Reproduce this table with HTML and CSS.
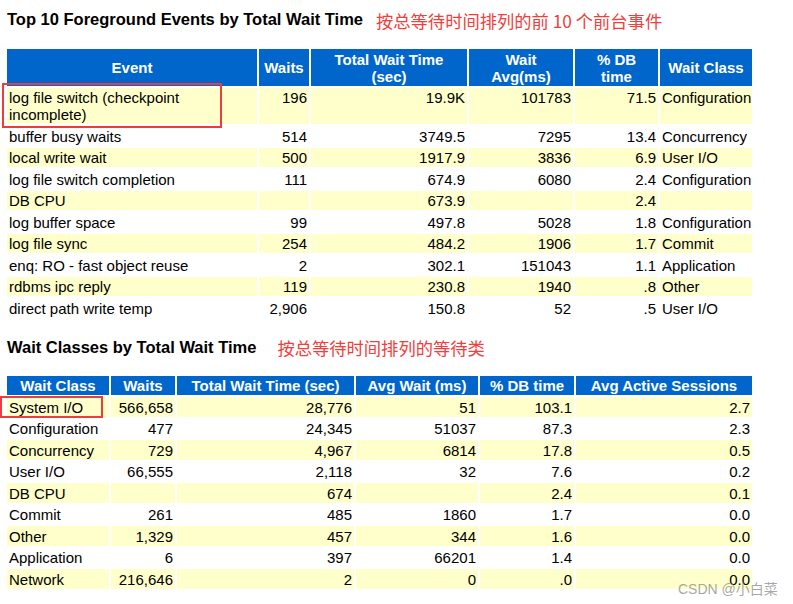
FILE: index.html
```html
<!DOCTYPE html>
<html>
<head>
<meta charset="utf-8">
<link rel="stylesheet" href="styles.css">
</head>
<body>
<div class="page">
  <div class="title-row t1">
    <h2 class="title">Top 10 Foreground Events by Total Wait Time</h2>
    <span class="note note1">按总等待时间排列的前 10 个前台事件</span>
  </div>
  <table class="awr awr1">
    <tr>
      <th class="c1">Event</th>
      <th class="c2">Waits</th>
      <th class="c3">Total Wait Time<br>(sec)</th>
      <th class="c4">Wait<br>Avg(ms)</th>
      <th class="c5">% DB<br>time</th>
      <th class="c6">Wait Class</th>
    </tr>
    <tr class="y"><td class="hl-cell"><span class="hl hl1"></span>log file switch (checkpoint<br>incomplete)</td><td class="n">196</td><td class="n">19.9K</td><td class="n">101783</td><td class="n">71.5</td><td>Configuration</td></tr>
    <tr><td>buffer busy waits</td><td class="n">514</td><td class="n">3749.5</td><td class="n">7295</td><td class="n">13.4</td><td>Concurrency</td></tr>
    <tr class="y"><td>local write wait</td><td class="n">500</td><td class="n">1917.9</td><td class="n">3836</td><td class="n">6.9</td><td>User I/O</td></tr>
    <tr><td>log file switch completion</td><td class="n">111</td><td class="n">674.9</td><td class="n">6080</td><td class="n">2.4</td><td>Configuration</td></tr>
    <tr class="y"><td>DB CPU</td><td class="n"></td><td class="n">673.9</td><td class="n"></td><td class="n">2.4</td><td></td></tr>
    <tr><td>log buffer space</td><td class="n">99</td><td class="n">497.8</td><td class="n">5028</td><td class="n">1.8</td><td>Configuration</td></tr>
    <tr class="y"><td>log file sync</td><td class="n">254</td><td class="n">484.2</td><td class="n">1906</td><td class="n">1.7</td><td>Commit</td></tr>
    <tr><td>enq: RO - fast object reuse</td><td class="n">2</td><td class="n">302.1</td><td class="n">151043</td><td class="n">1.1</td><td>Application</td></tr>
    <tr class="y"><td>rdbms ipc reply</td><td class="n">119</td><td class="n">230.8</td><td class="n">1940</td><td class="n">.8</td><td>Other</td></tr>
    <tr><td>direct path write temp</td><td class="n">2,906</td><td class="n">150.8</td><td class="n">52</td><td class="n">.5</td><td>User I/O</td></tr>
  </table>

  <div class="title-row t2">
    <h2 class="title">Wait Classes by Total Wait Time</h2>
    <span class="note note2">按总等待时间排列的等待类</span>
  </div>
  <table class="awr awr2">
    <tr>
      <th class="d1">Wait Class</th>
      <th class="d2">Waits</th>
      <th class="d3">Total Wait Time (sec)</th>
      <th class="d4">Avg Wait (ms)</th>
      <th class="d5">% DB time</th>
      <th class="d6">Avg Active Sessions</th>
    </tr>
    <tr class="y"><td class="hl-cell"><span class="hl hl2"></span>System I/O</td><td class="n">566,658</td><td class="n">28,776</td><td class="n">51</td><td class="n">103.1</td><td class="n">2.7</td></tr>
    <tr><td>Configuration</td><td class="n">477</td><td class="n">24,345</td><td class="n">51037</td><td class="n">87.3</td><td class="n">2.3</td></tr>
    <tr class="y"><td>Concurrency</td><td class="n">729</td><td class="n">4,967</td><td class="n">6814</td><td class="n">17.8</td><td class="n">0.5</td></tr>
    <tr><td>User I/O</td><td class="n">66,555</td><td class="n">2,118</td><td class="n">32</td><td class="n">7.6</td><td class="n">0.2</td></tr>
    <tr class="y"><td>DB CPU</td><td class="n"></td><td class="n">674</td><td class="n"></td><td class="n">2.4</td><td class="n">0.1</td></tr>
    <tr><td>Commit</td><td class="n">261</td><td class="n">485</td><td class="n">1860</td><td class="n">1.7</td><td class="n">0.0</td></tr>
    <tr class="y"><td>Other</td><td class="n">1,329</td><td class="n">457</td><td class="n">344</td><td class="n">1.6</td><td class="n">0.0</td></tr>
    <tr><td>Application</td><td class="n">6</td><td class="n">397</td><td class="n">66201</td><td class="n">1.4</td><td class="n">0.0</td></tr>
    <tr class="y"><td>Network</td><td class="n">216,646</td><td class="n">2</td><td class="n">0</td><td class="n">.0</td><td class="n">0.0</td></tr>
  </table>
  <div class="watermark">CSDN @小白菜</div>
</div>
</body>
</html>
```

FILE: styles.css
```css
html, body {
  margin: 0;
  padding: 0;
  background: #ffffff;
}

.page {
  position: relative;
  width: 793px;
  height: 604px;
  overflow: hidden;
  font-family: "Liberation Sans", Arial, sans-serif;
  color: #000;
}

.title-row {
  display: flex;
  align-items: center;
  height: 20px;
  padding-left: 7px;
}

.t1 { margin-top: 9px; margin-bottom: 18px; }
.t2 { margin-top: 17px; margin-bottom: 17px; }

.title {
  margin: 0;
  font-size: 16.5px;
  font-weight: bold;
  line-height: 20px;
  color: #000;
}

.note {
  font-family: "Noto Sans CJK SC", "Noto Sans", sans-serif;
  font-size: 17.3px;
  line-height: 20px;
  color: #f0403c;
}

.note1 { margin-left: 13px; margin-top: 3px; }
.note2 { margin-left: 21px; margin-top: 3px; }

.awr {
  margin-left: 5px;
  border-collapse: separate;
  border-spacing: 2px;
  table-layout: fixed;
  width: 749px;
  font-size: 15px;
}

.awr th, .awr td {
  box-sizing: border-box;
  padding: 1.5px 2px 1px;
  line-height: 17px;
  white-space: nowrap;
}

.awr th {
  background: #0066cc;
  color: #fff;
  font-weight: bold;
  text-align: center;
  vertical-align: middle;
}

.awr td {
  vertical-align: top;
  text-align: left;
}

.awr td.n { text-align: right; }

.awr tr.y td { background: #ffffcc; }

.c1 { width: 250px; }
.c2 { width: 50px; }
.c3 { width: 156px; }
.c4 { width: 104px; }
.c5 { width: 83px; }
.c6 { width: 92px; }

.d1 { width: 102px; }
.d2 { width: 64px; }
.d3 { width: 177px; }
.d4 { width: 122px; }
.d5 { width: 94px; }
.d6 { width: 176px; }

.hl-cell { position: relative; }

.hl {
  position: absolute;
  border: 2.5px solid #ee3b3b;
  box-sizing: border-box;
  pointer-events: none;
}

.hl1 {
  left: -5px;
  top: -5px;
  width: 220px;
  height: 45px;
}

.hl2 {
  left: -7px;
  top: -1.5px;
  width: 103px;
  height: 22px;
}

.watermark {
  position: absolute;
  left: 678px;
  top: 580px;
  font-family: "Liberation Sans", "Noto Sans CJK SC", sans-serif;
  font-size: 14px;
  line-height: 18px;
  color: rgba(150, 150, 150, 0.85);
}
```
